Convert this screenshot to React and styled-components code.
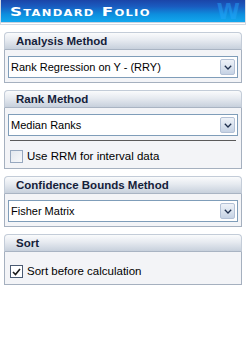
import styled, { createGlobalStyle } from "styled-components";

const GlobalStyle = createGlobalStyle`
  html, body {
    margin: 0;
    padding: 0;
    background: #ffffff;
  }
  body {
    font-family: "Liberation Sans", Arial, sans-serif;
  }
`;

const Page = styled.div`
  width: 246px;
  height: 343px;
  background: #ffffff;
  display: flex;
  flex-direction: column;
`;

const TitleFrame = styled.div`
  border: 1px solid #d4dae3;
  border-top: none;
  background: #ffffff;
  padding: 0 0 1px 0;
`;

const TitleBar = styled.div`
  height: 22px;
  border-bottom: 1px solid #c9d2de;
  background: linear-gradient(
    to bottom,
    #1b45a8 0%,
    #1a5cc0 30%,
    #0d8ede 65%,
    #12a8ee 100%
  );
  display: flex;
  align-items: center;
  justify-content: space-between;
  overflow: hidden;
`;

const Title = styled.span`
  display: inline-block;
  margin-left: 9px;
  margin-top: 1px;
  color: #ffffff;
  font-family: "DejaVu Sans", sans-serif;
  font-weight: bold;
  font-size: 13px;
  font-variant: small-caps;
  letter-spacing: 1px;
  transform: scaleX(1.28);
  transform-origin: left center;
`;

const Watermark = styled.span`
  margin-right: 6px;
  margin-top: 2px;
  font-family: "DejaVu Sans", sans-serif;
  font-weight: bold;
  font-size: 21px;
  line-height: 22px;
  color: rgba(40, 170, 255, 0.45);
  letter-spacing: -1px;
`;

const Panels = styled.div`
  display: flex;
  flex-direction: column;
  gap: 7px;
  padding: 7px 4px 0 4px;
`;

const Panel = styled.section`
  display: flex;
  flex-direction: column;
`;

const PanelHeader = styled.div`
  height: 16px;
  border: 1px solid #c3ccd8;
  border-bottom: 1px solid #a9b4c3;
  border-radius: 4px 4px 0 0;
  background: linear-gradient(to bottom, #fafbfc 0%, #e6eaf0 45%, #c7d0dc 100%);
  padding-left: 11px;
  display: flex;
  align-items: center;
  font-family: "Liberation Sans", Arial, sans-serif;
  font-weight: bold;
  font-size: 11.5px;
  color: #15213a;
`;

const PanelBody = styled.div`
  border: 1px solid #a5b0bf;
  border-top: none;
  background: #f3f4f7;
  padding: ${(p) => p.$pad || "6px 3px 4px 3px"};
  display: flex;
  flex-direction: column;
`;

const Select = styled.div`
  height: 20px;
  border: 1px solid #7f9db9;
  background: #ffffff;
  display: flex;
  align-items: center;
  justify-content: space-between;
  padding: 0 2px 0 2px;
  font-family: "Liberation Sans", Arial, sans-serif;
  font-size: 11px;
  color: #000000;
`;

const DropButton = styled.div`
  width: 13px;
  height: 14px;
  border: 1px solid #b3c1d6;
  border-radius: 2px;
  background: linear-gradient(to bottom, #eef2f8 0%, #d9e2ee 55%, #c5d2e4 100%);
  display: flex;
  align-items: center;
  justify-content: center;
`;

const Separator = styled.div`
  height: 1px;
  background: #5a5a5a;
  margin: 4px 2px 0 2px;
`;

const CheckRow = styled.label`
  display: flex;
  align-items: center;
  gap: 4px;
  height: 13px;
  line-height: 13px;
  margin: ${(p) => p.$margin || "0"};
  font-family: "Liberation Sans", Arial, sans-serif;
  font-size: 11.5px;
  color: #000000;
`;

const Box = styled.span`
  width: 11px;
  height: 11px;
  border: 1px solid ${(p) => (p.$checked ? "#4a5a72" : "#97a8bf")};
  background: ${(p) =>
    p.$checked
      ? "#ffffff"
      : "linear-gradient(135deg, #e3e8ef 0%, #f7f8fa 100%)"};
  display: flex;
  align-items: center;
  justify-content: center;
  margin-left: 2px;
`;

const Chevron = () => (
  <svg width="8" height="5" viewBox="0 0 8 5">
    <path d="M0.8 0.8 L4 4 L7.2 0.8" fill="none" stroke="#1f2f4d" strokeWidth="1.3" />
  </svg>
);

const Check = () => (
  <svg width="9" height="8" viewBox="0 0 9 8">
    <path d="M1 4 L3.5 6.5 L8 1" fill="none" stroke="#1a1a1a" strokeWidth="1.6" />
  </svg>
);

const Dropdown = ({ value }) => (
  <Select>
    <span>{value}</span>
    <DropButton>
      <Chevron />
    </DropButton>
  </Select>
);

const App = () => {
  return (
    <Page>
      <GlobalStyle />
      <TitleFrame>
        <TitleBar>
          <Title>Standard Folio</Title>
          <Watermark>W</Watermark>
        </TitleBar>
      </TitleFrame>

      <Panels>
        <Panel>
          <PanelHeader>Analysis Method</PanelHeader>
          <PanelBody>
            <Dropdown value="Rank Regression on Y - (RRY)" />
          </PanelBody>
        </Panel>

        <Panel>
          <PanelHeader>Rank Method</PanelHeader>
          <PanelBody $pad="6px 3px 5px 3px">
            <Dropdown value="Median Ranks" />
            <Separator />
            <CheckRow $margin="9px 0 0 0">
              <Box />
              <span>Use RRM for interval data</span>
            </CheckRow>
          </PanelBody>
        </Panel>

        <Panel>
          <PanelHeader>Confidence Bounds Method</PanelHeader>
          <PanelBody>
            <Dropdown value="Fisher Matrix" />
          </PanelBody>
        </Panel>

        <Panel>
          <PanelHeader>Sort</PanelHeader>
          <PanelBody $pad="13px 3px 6px 3px">
            <CheckRow>
              <Box $checked>
                <Check />
              </Box>
              <span>Sort before calculation</span>
            </CheckRow>
          </PanelBody>
        </Panel>
      </Panels>
    </Page>
  );
};

export default App;
